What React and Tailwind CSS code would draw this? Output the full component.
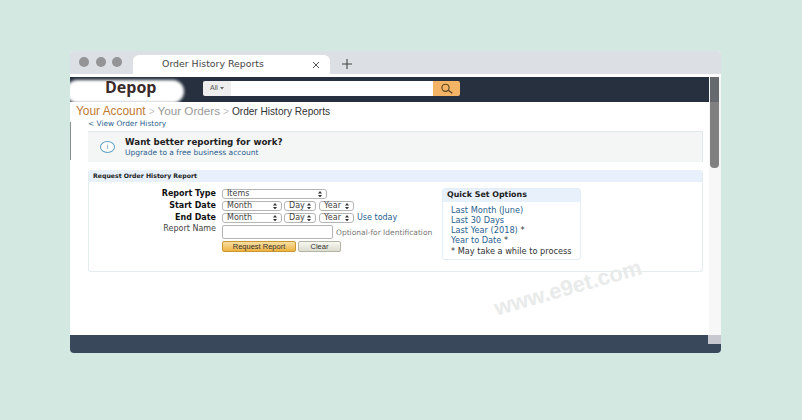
import React from "react";

const Sel = ({ w, label }) => (
  <div className={`${w} h-[10px] border border-[#b5b5b5] rounded-[3px] bg-white flex items-center justify-between pl-[4px] pr-[4px] text-[8px] leading-none text-[#444]`}>
    <span>{label}</span>
    <span className="flex flex-col gap-[1px]">
      <svg width="4" height="2.5" viewBox="0 0 4 2.5"><path d="M0 2.5 2 0l2 2.5z" fill="#333" /></svg>
      <svg width="4" height="2.5" viewBox="0 0 4 2.5"><path d="M0 0h4L2 2.5z" fill="#333" /></svg>
    </span>
  </div>
);

const Label = ({ bold, children }) => (
  <div className={`w-[127px] text-right text-[8px] leading-none ${bold ? "font-bold text-[#111]" : "text-[#444]"}`}>{children}</div>
);

const Q = ({ children }) => <div className="h-[10.3px] leading-[10px] text-[#2a5f8f]">{children}</div>;

const DateRow = ({ label, extra }) => (
  <div className="flex items-center h-[12px]">
    <Label bold>{label}</Label>
    <div className="ml-[6px] flex items-center gap-[2px]">
      <Sel w="w-[60px]" label="Month" />
      <Sel w="w-[32px]" label="Day" />
      <div className="ml-[1px]"><Sel w="w-[35px]" label="Year" /></div>
    </div>
    {extra}
  </div>
);

export default function App() {
  return (
    <div className="relative w-[802px] h-[420px] overflow-hidden bg-[#d2e8e0] pt-[51px] pl-[70px] font-['DejaVu_Sans',sans-serif]">
      <div className="w-[651px] h-[302px] rounded-[4px] overflow-hidden flex flex-col bg-white">
        {/* tab strip */}
        <div className="h-[23px] shrink-0 bg-[#dcdfe3] flex items-end pl-[9px]">
          <div className="h-[23px] flex items-center gap-[6.5px] pb-[1px]">
            <span className="w-[10px] h-[10px] rounded-full bg-[#949497]" />
            <span className="w-[10px] h-[10px] rounded-full bg-[#949497]" />
            <span className="w-[10px] h-[10px] rounded-full bg-[#949497]" />
          </div>
          <div className="ml-[11px] w-[197px] h-[19px] bg-white rounded-t-[6px] flex items-center pl-[29px] pr-[10px] justify-between text-[9.4px] text-[#444]">
            <span>Order History Reports</span>
            <svg width="8" height="8" viewBox="0 0 8 8"><path d="M1 1l6 6M7 1L1 7" stroke="#555" strokeWidth="1" /></svg>
          </div>
          <svg className="ml-[12px] mb-[5px]" width="10" height="10" viewBox="0 0 10 10"><path d="M5 0v10M0 5h10" stroke="#444" strokeWidth="1.1" /></svg>
        </div>
        <div className="h-[3px] shrink-0 bg-white" />
        <div className="flex-1 flex min-h-0">
          <div className="flex-1 min-w-0 flex flex-col">
            {/* nav */}
            <div className="relative h-[25px] shrink-0 bg-[#26303f] flex items-start pl-[133px] pt-[4px]">
              <div className="absolute -left-[4px] top-[3px] w-[118px] h-[23px] rounded-[12px] bg-white blur-[1.5px]" />
              <div className="absolute left-[35px] -top-[1px] text-[16px] leading-[22px] font-bold text-[#3a2a2a] font-['Open_Sans',sans-serif]">Depop</div>
              <div className="w-[28px] h-[15px] bg-[#eeeeee] rounded-l-[2px] flex items-center justify-center gap-[2px] text-[7px] text-[#555] font-['Liberation_Sans',sans-serif]">
                All
                <svg width="4" height="3" viewBox="0 0 4 3"><path d="M0 0h4L2 2.5z" fill="#666" /></svg>
              </div>
              <div className="w-[202px] h-[15px] bg-white" />
              <div className="w-[27px] h-[15px] bg-[#f3b465] rounded-r-[2px] flex items-center justify-center">
                <svg width="14" height="12" viewBox="0 0 14 12" fill="none"><circle cx="5.5" cy="4.8" r="3.6" stroke="#5a4420" strokeWidth="1.1" /><path d="M8.3 7.3l4 3" stroke="#5a4420" strokeWidth="1.4" /></svg>
              </div>
            </div>
            {/* body */}
            <div className="relative flex-1 min-h-0">
              <div className="h-[13px] mt-[2px] pl-[6px] flex items-baseline leading-[13px] whitespace-nowrap font-['Liberation_Sans',sans-serif] text-[#999]">
                <span className="text-[11.9px] text-[#c0792f]">Your Account</span>
                <span className="mx-[3px] text-[10px] text-[#c4c4c4]">&gt;</span>
                <span className="text-[11.7px]">Your Orders</span>
                <span className="mx-[3px] text-[10px] text-[#c4c4c4]">&gt;</span>
                <span className="text-[10.1px] text-[#333]">Order History Reports</span>
              </div>
              <div className="mt-[2px] ml-[18px] h-[10px] leading-[10px] text-[7.4px] text-[#2a5f8f]">&lt; View Order History</div>
              <div className="mt-[2px] ml-[18px] w-[615px] h-[31px] bg-[#f4f5f5] border-t border-r border-[#dfe8ea] flex items-center pl-[12px]">
                <div className="w-[15px] h-[12px] rounded-[50%] border border-[#5a9fc4] flex items-center justify-center text-[7px] leading-none text-[#3b83ad] bg-white">i</div>
                <div className="ml-[10px]">
                  <div className="text-[8.7px] leading-[11px] font-bold text-[#222]">Want better reporting for work?</div>
                  <div className="text-[7.5px] leading-[9px] text-[#2a5f8f]">Upgrade to a free business account</div>
                </div>
              </div>
              {/* panel */}
              <div className="mt-[8px] ml-[18px] w-[615px] h-[102px] rounded-[3px] border-b border-x border-[#e3ecef]">
                <div className="h-[12px] bg-[#e8f1fb] rounded-t-[3px] pl-[4px] text-[6.2px] leading-[12px] font-bold text-[#222]">Request Order History Report</div>
                <div className="flex">
                  <div className="w-[353px] shrink-0 pt-[6px] flex flex-col">
                    <div className="flex items-center h-[12px]">
                      <Label bold>Report Type</Label>
                      <div className="ml-[6px]"><Sel w="w-[105px]" label="Items" /></div>
                    </div>
                    <DateRow label="Start Date" />
                    <DateRow label="End Date" extra={<span className="ml-[3px] text-[8px] leading-none text-[#2a5f8f]">Use today</span>} />
                    <div className="flex items-start h-[16px] mt-[1px]">
                      <Label>Report Name</Label>
                      <div className="ml-[6px] w-[111px] h-[14px] border border-[#b5b5b5] rounded-[2px] bg-white" />
                      <span className="ml-[3px] mt-[3px] text-[7.5px] leading-[9px] text-[#777] whitespace-nowrap">Optional-for Identification</span>
                    </div>
                    <div className="flex gap-[2px] ml-[133px]">
                      <div className="w-[74px] h-[11px] rounded-[2px] bg-gradient-to-b from-[#f7dfa0] to-[#eeb33f] border border-[#c9982f] flex items-center justify-center text-[7.5px] text-[#333] font-['Liberation_Sans',sans-serif]">Request Report</div>
                      <div className="w-[43px] h-[11px] rounded-[2px] bg-gradient-to-b from-[#f7f8f0] to-[#dcdccf] border border-[#b5b5a5] flex items-center justify-center text-[7.5px] text-[#333] font-['Liberation_Sans',sans-serif]">Clear</div>
                    </div>
                  </div>
                  <div className="mt-[6px] w-[139px] h-[72px] rounded-[3px] border border-[#e3edf6]">
                    <div className="h-[13px] bg-[#e8f1fb] pl-[4px] text-[7.9px] leading-[12px] font-bold text-[#222]">Quick Set Options</div>
                    <div className="pl-[8px] pt-[2.5px] text-[8.2px] whitespace-nowrap">
                      <Q>Last Month (June)</Q>
                      <Q>Last 30 Days</Q>
                      <Q>Last Year (2018) <span className="text-[#333]">*</span></Q>
                      <Q>Year to Date <span className="text-[#333]">*</span></Q>
                      <div className="h-[10px] leading-[10px] text-[#333]">* May take a while to process</div>
                    </div>
                  </div>
                </div>
              </div>
              {/* side sliver */}
              <div className="absolute left-0 top-[20px] w-[1px] h-[38px] bg-[#8a8f92]" />
              {/* watermark */}
              <div className="absolute left-[422px] top-[175px] -rotate-[16deg] text-[22px] leading-none font-bold text-[#e9eaea] font-['Liberation_Sans',sans-serif] whitespace-nowrap">www.e9et.com</div>
            </div>
          </div>
          {/* scrollbar */}
          <div className="w-[12px] shrink-0 bg-[#f7f7f7] flex flex-col relative">
            <div className="absolute left-[1px] top-0 w-[9px] h-[91px] bg-[#808080] rounded-b-[4px]">
              <div className="h-[25px] bg-[#66696d]" />
            </div>
          </div>
        </div>
        {/* footer */}
        <div className="relative h-[18px] shrink-0 bg-[#39495b]">
          <div className="absolute right-0 top-0 w-[13px] h-[9px] bg-[#c8c8d0]" />
        </div>
      </div>
    </div>
  );
}
